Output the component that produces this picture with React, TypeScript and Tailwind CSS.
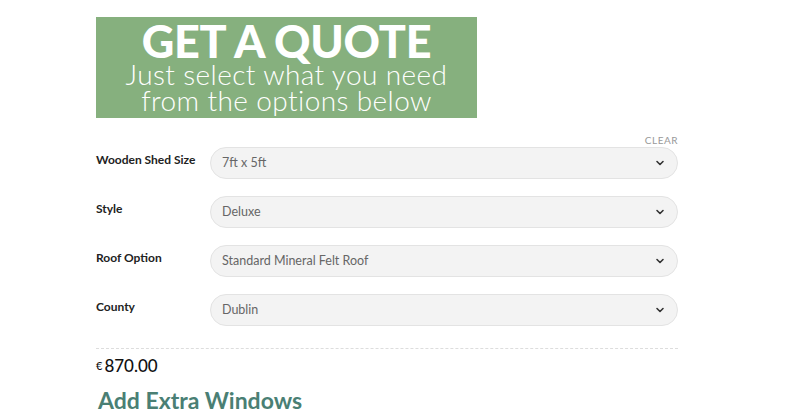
import React from 'react';

const fields = [
  { label: 'Wooden Shed Size', value: '7ft x 5ft' },
  { label: 'Style', value: 'Deluxe' },
  { label: 'Roof Option', value: 'Standard Mineral Felt Roof' },
  { label: 'County', value: 'Dublin' },
];

const Chevron = () => (
  <svg width="10" height="10" viewBox="0 0 10 10" fill="none" className="text-[#333]">
    <path d="M2 3.5 L5 6.5 L8 3.5" stroke="currentColor" strokeWidth="1.6" strokeLinecap="round" strokeLinejoin="round" />
  </svg>
);

export default function App() {
  return (
    <div className="w-[800px] h-[418px] bg-white overflow-hidden font-['Lato','Open_Sans',sans-serif]">
      <div className="ml-[96px] w-[582px] pt-[17px]">
        {/* banner */}
        <div className="w-[381px] h-[101px] bg-[#86b07e] flex flex-col items-center text-white">
          <div className="mt-[4px] text-[45px] font-black tracking-[-0.3px] leading-[40px]">GET A QUOTE</div>
          <div className="text-[28px] font-light leading-[26px] tracking-[0.4px]">Just select what you need</div>
          <div className="text-[28px] font-light leading-[26px] tracking-[0.4px]">from the options below</div>
        </div>

        <div className="flex justify-end mt-[16px] text-[10px] text-[#999] tracking-[0.5px] leading-[12px]">CLEAR</div>

        <div className="flex flex-col gap-[17px] mt-[1px]">
          {fields.map((f) => (
            <div key={f.label} className="flex items-center">
              <div className="w-[114px] text-[12px] font-bold text-[#222] -mt-[6px]">{f.label}</div>
              <div className="flex-1 h-[32px] rounded-full bg-[#f3f3f3] border border-[#e3e3e3] flex items-center justify-between pl-[11px] pr-[12px]">
                <span className="text-[12.5px] text-[#666]">{f.value}</span>
                <Chevron />
              </div>
            </div>
          ))}
        </div>

        <div className="mt-[22px] border-t border-dashed border-[#ddd]" />
        <div className="mt-[6px] text-[17px] font-medium text-[#111] leading-[22px]">
          <span className="text-[11px] align-top mr-[2px]">€</span>870.00
        </div>
        <div className="mt-[9px] ml-[2px] text-[23px] font-bold text-[#4a7f74] leading-[28px]">Add Extra Windows</div>
      </div>
    </div>
  );
}
